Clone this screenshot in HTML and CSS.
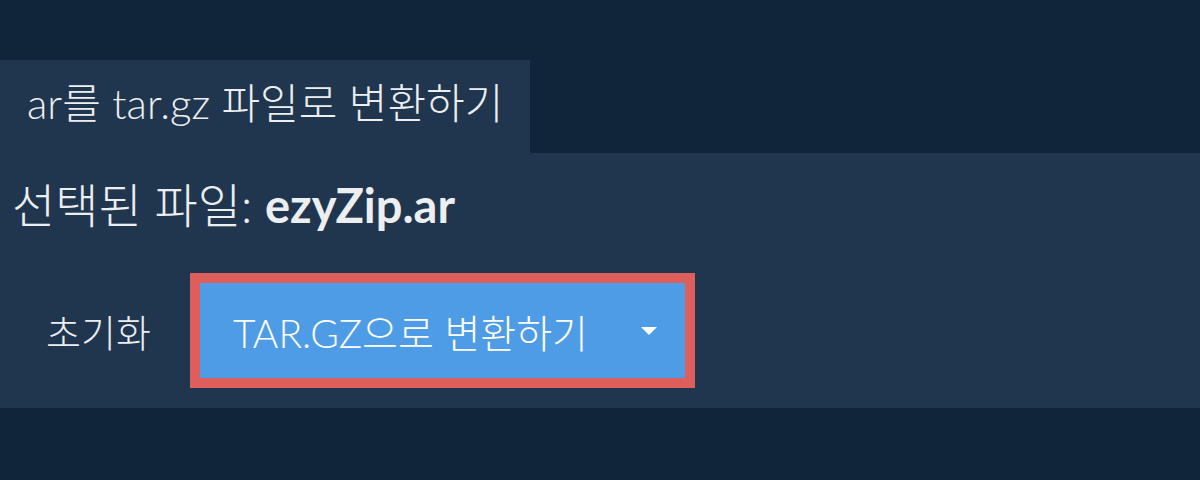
FILE: index.html
```html
<!DOCTYPE html>
<html lang="ko">
<head>
    <meta charset="UTF-8">
    <meta name="viewport" content="width=device-width, initial-scale=1.0">
    <title>ar를 tar.gz 파일로 변환하기</title>
    <link rel="stylesheet" href="styles.css">
</head>
<body>
    <div class="tabs">
        <div class="tab">ar를 tar.gz 파일로 변환하기</div>
    </div>
    <div class="panel">
        <p class="selected">선택된 파일: <strong>ezyZip.ar</strong></p>
        <div class="actions">
            <button class="reset-button" type="button">초기화</button>
            <div class="convert-wrap">
                <button class="convert-button" type="button">
                    <span>TAR.GZ으로 변환하기</span>
                    <span class="caret"></span>
                </button>
            </div>
        </div>
    </div>
</body>
</html>
```

FILE: styles.css
```css
body {
    margin: 0;
    background-color: #10243a;
    color: #eceef0;
    font-family: Lato, "Noto Sans CJK KR", sans-serif;
    font-weight: 300;
}
.tabs {
    padding-top: 60px;
    display: flex;
}
.tab {
    background-color: #20364e;
    width: 530px;
    height: 93px;
    box-sizing: border-box;
    padding: 18px 0 0 27px;
    font-size: 42px;
    line-height: 50px;
}
.panel {
    background-color: #20364e;
    height: 255px;
    box-sizing: border-box;
    padding: 22px 0 0 12px;
}
.selected {
    margin: 0;
    font-size: 47px;
    line-height: 60px;
}
.selected strong {
    font-weight: 700;
}
.actions {
    display: flex;
    align-items: center;
    margin-top: 38px;
}
.reset-button {
    background: none;
    border: none;
    color: #eceef0;
    font-family: inherit;
    font-weight: 300;
    font-size: 38px;
    padding: 0;
    margin-left: 34px;
    width: 144px;
    text-align: left;
}
.convert-wrap {
    border: 10px solid #dc5f5c;
}
.convert-button {
    display: flex;
    align-items: center;
    justify-content: space-between;
    width: 485px;
    height: 95px;
    padding: 0 28px 0 33px;
    box-sizing: border-box;
    background-color: #4e9be6;
    border: none;
    color: #ffffff;
    font-family: inherit;
    font-weight: 300;
    font-size: 39px;
}
.caret {
    width: 0;
    height: 0;
    border-left: 8px solid transparent;
    border-right: 8px solid transparent;
    border-top: 8px solid #ffffff;
}
```
